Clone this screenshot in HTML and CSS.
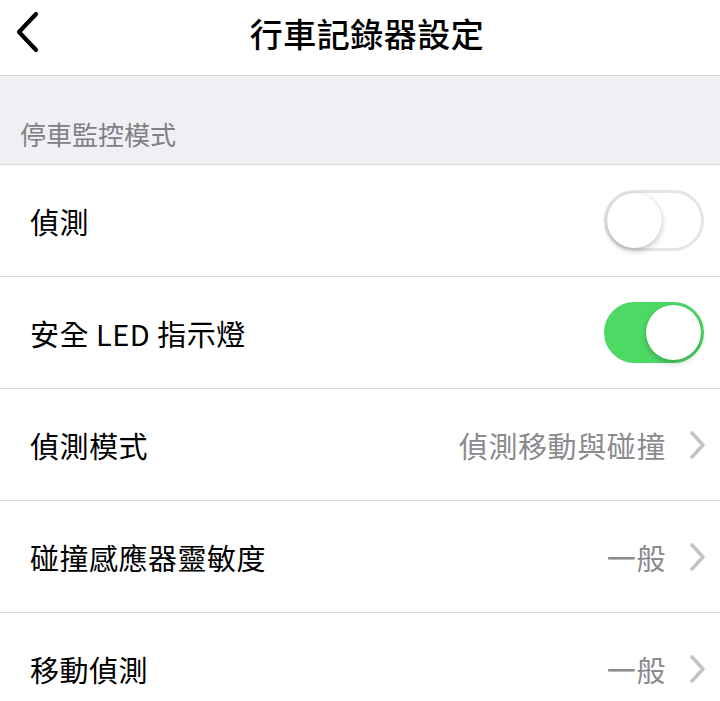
FILE: index.html
```html
<!DOCTYPE html>
<html lang="zh-Hant">
<head>
<meta charset="utf-8">
<title>行車記錄器設定</title>
<link rel="stylesheet" href="styles.css">
</head>
<body>
<div class="screen">
  <header class="nav">
    <svg class="back" width="30" height="44" viewBox="0 0 30 44" aria-hidden="true">
      <path d="M22 4 L5 22 L22 40" fill="none" stroke="#000" stroke-width="4.2" stroke-linecap="round" stroke-linejoin="round"/>
    </svg>
    <h1 class="title">行車記錄器設定</h1>
  </header>
  <div class="section-head">停車監控模式</div>
  <ul class="list">
    <li class="row">
      <span class="label">偵測</span>
      <span class="switch"><span class="knob"></span></span>
    </li>
    <li class="row">
      <span class="label">安全 LED 指示燈</span>
      <span class="switch on"><span class="knob"></span></span>
    </li>
    <li class="row">
      <span class="label">偵測模式</span>
      <span class="value">偵測移動與碰撞</span>
      <svg class="chev" width="18" height="30" viewBox="0 0 18 30" aria-hidden="true"><path d="M4 3 L15 15 L4 27" fill="none" stroke="#c4c4c7" stroke-width="3.6" stroke-linecap="round" stroke-linejoin="round"/></svg>
    </li>
    <li class="row">
      <span class="label">碰撞感應器靈敏度</span>
      <span class="value">一般</span>
      <svg class="chev" width="18" height="30" viewBox="0 0 18 30" aria-hidden="true"><path d="M4 3 L15 15 L4 27" fill="none" stroke="#c4c4c7" stroke-width="3.6" stroke-linecap="round" stroke-linejoin="round"/></svg>
    </li>
    <li class="row">
      <span class="label">移動偵測</span>
      <span class="value">一般</span>
      <svg class="chev" width="18" height="30" viewBox="0 0 18 30" aria-hidden="true"><path d="M4 3 L15 15 L4 27" fill="none" stroke="#c4c4c7" stroke-width="3.6" stroke-linecap="round" stroke-linejoin="round"/></svg>
    </li>
  </ul>
</div>
</body>
</html>
```
FILE: styles.css
```css
* { box-sizing: border-box; }
html, body { margin: 0; padding: 0; background: #fff; }
body {
  font-family: "Noto Sans CJK TC", "Noto Sans", sans-serif;
  color: #000;
  width: 720px;
  height: 701px;
  overflow: hidden;
}
.screen { display: flex; flex-direction: column; }
.nav {
  height: 76px;
  border-bottom: 1px solid #d2d2d6;
  display: flex;
  align-items: center;
  justify-content: center;
  position: relative;
}
.back {
  position: absolute;
  left: 14px;
  top: 10px;
}
.title {
  margin: -10px 0 0 14px;
  font-size: 33px;
  font-weight: 500;
  line-height: 40px;
  letter-spacing: 0.5px;
}
.section-head {
  height: 89px;
  background: #efeff4;
  border-bottom: 1px solid #d8d8dc;
  padding: 0 0 12px 20px;
  display: flex;
  align-items: flex-end;
  font-size: 26px;
  line-height: 36px;
  color: #808085;
}
.list { list-style: none; margin: 0; padding: 0; }
.row {
  height: 112px;
  border-bottom: 1px solid #dcdcdf;
  display: flex;
  align-items: center;
  padding: 0 17px 0 30px;
}
.label {
  flex: 1;
  font-size: 29px;
  line-height: 40px;
  letter-spacing: 0.5px;
}
.value {
  font-size: 29px;
  line-height: 40px;
  color: #8a8a8f;
  letter-spacing: 0.6px;
  margin-right: 22px;
}
.chev { display: block; margin-right: -3px; }
.switch {
  width: 100px;
  height: 61px;
  border-radius: 31px;
  border: 3px solid #e5e5e8;
  background: #fff;
  position: relative;
  margin-right: -1px;
}
.switch .knob {
  position: absolute;
  top: 0;
  left: 0;
  width: 55px;
  height: 55px;
  border-radius: 50%;
  background: #fff;
  box-shadow: 0 3px 6px rgba(0,0,0,0.22), 0 0 1px rgba(0,0,0,0.2);
}
.switch.on {
  background: #4cd964;
  border-color: #4cd964;
}
.switch.on .knob {
  left: auto;
  right: 0;
}
```
